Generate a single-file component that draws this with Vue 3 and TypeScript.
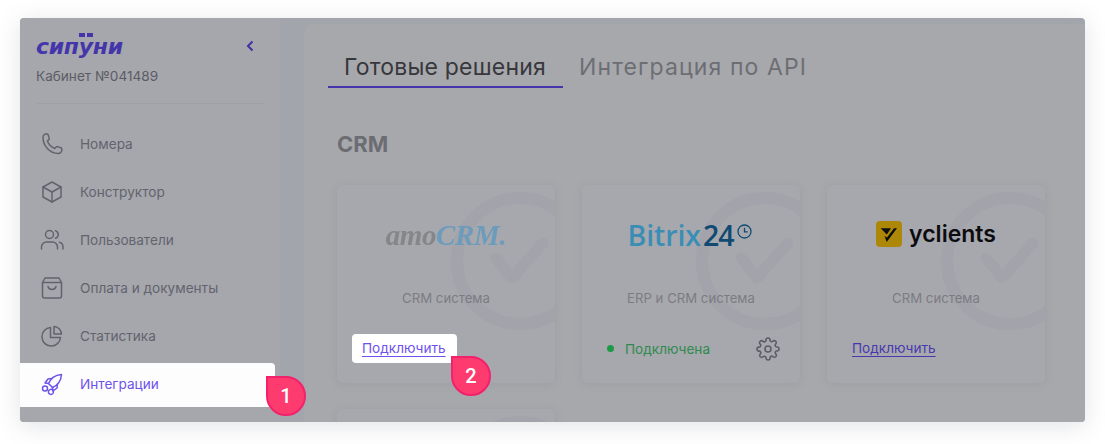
<template>
  <div class="page">
    <div class="panel">
      <aside class="sidebar">
        <div class="brand">
          <div class="logo">
            <span class="logo-text">сипуни</span>
            <i class="logo-dot dot-a"></i>
            <i class="logo-dot dot-b"></i>
          </div>
          <svg class="collapse" width="10" height="12" viewBox="0 0 10 12" fill="none">
            <path d="M7.500 1.500 3 6l4.500 4.500" stroke="#3f32a0" stroke-width="2" />
          </svg>
        </div>
        <div class="cabinet">Кабинет №041489</div>
        <div class="divider"></div>
        <nav class="nav">
          <a
            v-for="item in menu"
            :key="item.label"
            class="nav-item"
            :class="{ active: item.active }"
          >
            <svg class="nav-icon" width="24" height="24" viewBox="0 0 24 24" fill="none" stroke="currentColor" stroke-width="1.5" stroke-linecap="round" stroke-linejoin="round">
              <path v-for="d in item.paths" :key="d" :d="d" />
            </svg>
            <span>{{ item.label }}</span>
            <span v-if="item.active" class="badge badge-nav">1</span>
          </a>
        </nav>
      </aside>

      <main class="content">
        <div class="tabs">
          <div class="tab current">Готовые решения</div>
          <div class="tab">Интеграция по API</div>
        </div>
        <h2 class="section-title">CRM</h2>
        <div class="cards">
          <div v-for="card in cards" :key="card.id" class="card" :class="{ open: card.highlight }">
            <div class="watermark-clip">
              <svg class="watermark" width="140" height="140" viewBox="0 0 140 140" fill="none">
                <circle cx="70" cy="70" r="63" stroke="#a2a3ab" stroke-width="12" />
                <path d="M46 67 62 87 93 52" stroke="#a2a3ab" stroke-width="11" stroke-linecap="round" stroke-linejoin="round" />
              </svg>
            </div>

            <div class="card-logo">
              <div v-if="card.id === 'amo'" class="amo"><span class="amo-a">amo</span><span class="amo-b">CRM.</span></div>
              <div v-else-if="card.id === 'bitrix'" class="bitrix">
                <span class="bx-a">Bitrix</span><span class="bx-b">24</span>
                <svg class="bx-clock" width="15" height="15" viewBox="0 0 15 15" fill="none" stroke="#0f4a73" stroke-width="1.3">
                  <circle cx="7.500" cy="7.500" r="6.500" />
                  <path d="M7.500 3.800v4h3.200" />
                </svg>
              </div>
              <div v-else-if="card.id === 'yc'" class="yc">
                <svg width="26" height="26" viewBox="0 0 26 26">
                  <rect width="26" height="26" rx="4" fill="#ad8707" />
                  <path d="M4.700 7.300H15l-4.200 6.200zM18 7.300h3L10.700 21l-2.200-6 2.500 1.500z" fill="#0e0e0e" />
                </svg>
                <span>yclients</span>
              </div>
            </div>

            <div class="card-desc">{{ card.desc }}</div>

            <div class="card-foot">
              <template v-if="card.connected">
                <span class="status"><i class="status-dot"></i>Подключена</span>
                <svg class="gear" width="24" height="24" viewBox="0 0 24 24" fill="none" stroke="#5c5d68" stroke-width="1.6" stroke-linecap="round" stroke-linejoin="round">
                  <circle cx="12" cy="12" r="3" />
                  <path d="M19.400 15a1.650 1.650 0 0 0 .33 1.820l.06.06a2 2 0 1 1-2.830 2.830l-.06-.06a1.650 1.650 0 0 0-1.820-.33 1.650 1.650 0 0 0-1 1.510V21a2 2 0 1 1-4 0v-.09A1.650 1.650 0 0 0 9 19.400a1.650 1.650 0 0 0-1.820.33l-.06.06a2 2 0 1 1-2.830-2.830l.06-.06a1.650 1.650 0 0 0 .33-1.820 1.650 1.650 0 0 0-1.510-1H3a2 2 0 1 1 0-4h.09A1.650 1.650 0 0 0 4.600 9a1.650 1.650 0 0 0-.33-1.820l-.06-.06a2 2 0 1 1 2.830-2.830l.06.06a1.650 1.650 0 0 0 1.820.33H9a1.650 1.650 0 0 0 1-1.510V3a2 2 0 1 1 4 0v.09a1.650 1.650 0 0 0 1 1.510 1.650 1.650 0 0 0 1.820-.33l.06-.06a2 2 0 1 1 2.830 2.830l-.06.06a1.650 1.650 0 0 0-.33 1.820V9a1.650 1.650 0 0 0 1.510 1H21a2 2 0 1 1 0 4h-.09a1.650 1.650 0 0 0-1.510 1z" />
                </svg>
              </template>
              <a v-else class="connect" :class="{ lit: card.highlight }">
                Подключить
                <span v-if="card.highlight" class="badge badge-link">2</span>
              </a>
            </div>
          </div>
          <div class="card">
            <div class="watermark-clip">
              <svg class="watermark" width="140" height="140" viewBox="0 0 140 140" fill="none">
                <circle cx="70" cy="70" r="63" stroke="#a2a3ab" stroke-width="12" />
              </svg>
            </div>
          </div>
        </div>
      </main>
    </div>
  </div>
</template>

<script setup lang="ts">
interface MenuItem {
  label: string
  paths: string[]
  active?: boolean
}

interface Card {
  id: string
  desc: string
  connected?: boolean
  highlight?: boolean
}

const menu: MenuItem[] = [
  {
    label: 'Номера',
    paths: ['M3 5.500C3 3.600 4.400 2 6 2h1c.6 0 1 .3 1.200.9l1 3.300c.2.500 0 1-.3 1.400L7.400 9c1.200 3.200 4.100 6.200 7.300 7.500l1.500-1.500c.4-.3.900-.5 1.400-.3l3.300 1c.6.200.9.600.9 1.200v1.100c0 1.900-1.600 3.500-3.500 3.400C9.500 21.300 3 13.500 3 5.500z'],
  },
  {
    label: 'Конструктор',
    paths: ['M12 2 21 7v10l-9 5-9-5V7l9-5z', 'M3 7l9 5 9-5', 'M12 12v10'],
  },
  {
    label: 'Пользователи',
    paths: [
      'M9.500 10.500a4 4 0 1 0 0-8 4 4 0 0 0 0 8z',
      'M1.500 21v-2a5 5 0 0 1 5-5h6a5 5 0 0 1 5 5v2',
      'M15.500 2.700a4 4 0 0 1 0 7.600',
      'M19.500 14.300a5 5 0 0 1 3.500 4.700v2',
    ],
  },
  {
    label: 'Оплата и документы',
    paths: [
      'M5 2h14l2.500 4.500V20a2 2 0 0 1-2 2h-15a2 2 0 0 1-2-2V6.500L5 2z',
      'M2.500 6.500h19',
      'M8 10.500c.5 2 2 3 4 3s3.500-1 4-3',
    ],
  },
  {
    label: 'Статистика',
    paths: ['M10.500 3.500a9.300 9.300 0 1 0 10 10H10.500v-10z', 'M14 2.500a8 8 0 0 1 7.500 7.500H14V2.500z'],
  },
  {
    label: 'Интеграции',
    active: true,
    paths: [
      'M8.500 11.500C10.500 6.500 15 3 21.500 2.500 21 9 17.500 13.500 12.500 15.500l-4-4z',
      'M8.500 11.500 5 11l3-4 4-.5',
      'M12.500 15.500l.5 3.500 4-3 .5-4',
      'M5 14a2.500 2.500 0 1 1 0 5 2.500 2.500 0 0 1 0-5z',
      'M13 18.500a2.500 2.500 0 1 1-4.500 2 2.500 2.500 0 0 1 4.500-2z',
    ],
  },
]

const cards: Card[] = [
  { id: 'amo', desc: 'CRM система', highlight: true },
  { id: 'bitrix', desc: 'ERP и CRM система', connected: true },
  { id: 'yc', desc: 'CRM система' },
]
</script>

<style>
html,
body {
  margin: 0;
  background: #fff;
  overflow: hidden;
}
</style>

<style scoped>
.page {
  width: 1105px;
  height: 444px;
  padding: 18px 20px 22px;
  box-sizing: border-box;
  font-family: Inter, "Noto Sans", sans-serif;
}

.panel {
  display: flex;
  height: 404px;
  border-radius: 4px;
  background: #a3a5ac;
  box-shadow: 0 4px 24px rgba(110, 115, 130, 0.2);
}

.sidebar {
  width: 260px;
  flex: none;
  box-sizing: border-box;
  padding-top: 15px;
  border-radius: 4px 0 0 4px;
  background: #a6a7ac;
}

.brand {
  display: flex;
  align-items: center;
  justify-content: space-between;
  padding: 0 25px 0 16px;
  height: 25px;
}

.logo {
  position: relative;
  height: 25px;
}

.logo-text {
  display: block;
  font-family: "DejaVu Sans", sans-serif;
  font-size: 22px;
  line-height: 27px;
  font-weight: 700;
  font-style: italic;
  letter-spacing: -0.3px;
  color: #4435ab;
}

.logo-dot {
  position: absolute;
  top: 0;
  width: 6px;
  height: 4px;
  background: #4435ab;
}

.dot-a {
  left: 43px;
}

.dot-b {
  left: 51px;
}

.cabinet {
  margin: 9px 0 0 16px;
  font-size: 13.6px;
  line-height: 18px;
  color: #5b5c65;
}

.divider {
  height: 1px;
  margin: 18px 16px 0 16px;
  background: #a0a1a7;
}

.nav {
  display: flex;
  flex-direction: column;
  margin-top: 16px;
}

.nav-item {
  position: relative;
  display: flex;
  align-items: center;
  gap: 16px;
  width: 255px;
  height: 48px;
  box-sizing: border-box;
  padding-left: 20px;
  font-size: 13.6px;
  color: #62636e;
}

.nav-item.active {
  height: 44px;
  margin-top: 3px;
  padding-bottom: 2px;
  border-radius: 0 4px 4px 0;
  background: #fdfdfd;
  color: #6d52ec;
}

.content {
  flex: 1;
  min-width: 0;
  overflow: hidden;
  margin: 6px 0 0 24px;
  padding: 27px 0 0 0;
  border-radius: 10px 0 4px 0;
  background: #a7a8ac;
}

.tabs {
  display: flex;
  gap: 16px;
  height: 37px;
  margin-left: 24px;
}

.tab {
  font-size: 23px;
  line-height: 32px;
  letter-spacing: 1.1px;
  color: #6d6e74;
}

.tab.current {
  padding: 0 17px 0 16px;
  height: 37px;
  box-sizing: border-box;
  border-bottom: 2px solid #4435ab;
  letter-spacing: 0.2px;
  color: #37373c;
}

.section-title {
  margin: 36px 0 0 33px;
  font-size: 22px;
  line-height: 40px;
  font-weight: 700;
  color: #6c6d73;
}

.cards {
  display: grid;
  grid-template-columns: repeat(3, 218px);
  grid-auto-rows: 198px;
  gap: 26px 27px;
  margin: 21px 0 0 33px;
}

.card {
  position: relative;
  display: flex;
  flex-direction: column;
  border-radius: 6px;
  background: #a7a8ad;
  box-shadow: 0 1px 8px rgba(90, 92, 105, 0.12);
}

.watermark-clip {
  position: absolute;
  inset: 0;
  overflow: hidden;
  border-radius: 6px;
}

.watermark {
  position: absolute;
  top: 6px;
  left: 113px;
}

.card-logo {
  position: relative;
  display: flex;
  align-items: center;
  justify-content: center;
  height: 100px;
}

.amo {
  font-family: "Liberation Serif", serif;
  font-size: 29px;
  font-weight: 700;
  font-style: italic;
  letter-spacing: -0.4px;
  filter: blur(0.3px);
}

.amo-a {
  color: #858689;
}

.amo-b {
  color: #6c9bbb;
}

.bitrix {
  display: flex;
  align-items: center;
  margin-left: -2px;
  font-family: "Open Sans", sans-serif;
  font-size: 28.5px;
  font-weight: 600;
  letter-spacing: -0.1px;
}

.bx-a {
  color: #3a8db5;
}

.bx-b {
  margin-left: 2px;
  font-weight: 600;
  letter-spacing: -1px;
  color: #0f4a73;
}

.bx-clock {
  margin: -8px 0 0 4px;
}

.yc {
  display: flex;
  align-items: center;
  gap: 7px;
  margin-top: -2px;
  font-size: 23px;
  font-weight: 600;
  color: #0c0c10;
}

.card-desc {
  position: relative;
  margin-top: 3px;
  font-size: 13.2px;
  line-height: 20px;
  text-align: center;
  color: #7b7c83;
}

.card-foot {
  position: relative;
  display: flex;
  align-items: center;
  justify-content: space-between;
  height: 29px;
  margin-top: 26px;
  padding: 0 20px 0 15px;
}

.connect {
  position: relative;
  padding: 6px 11px 6px 10px;
  font-size: 13.6px;
  line-height: 17px;
  color: #4838ad;
  text-decoration: underline;
  text-underline-offset: 3px;
  text-decoration-thickness: 1px;
}

.connect.lit {
  border-radius: 4px;
  background: #fff;
  color: #6d52ec;
}

.status {
  display: flex;
  align-items: center;
  gap: 11px;
  padding-left: 10px;
  font-size: 13.6px;
  color: #2f8a4e;
}

.status-dot {
  width: 7px;
  height: 7px;
  border-radius: 50%;
  background: #1c9a45;
}

.badge {
  position: absolute;
  display: flex;
  align-items: center;
  justify-content: center;
  width: 40px;
  height: 40px;
  box-sizing: border-box;
  border: 2px solid #f3216b;
  border-radius: 0 50% 50% 50%;
  background: #fe3b6f;
  font-family: Roboto, sans-serif;
  font-size: 20px;
  font-weight: 500;
  color: #fff;
  text-decoration: none;
}

.badge-nav {
  top: 13px;
  left: 246px;
}

.badge-link {
  top: 22px;
  left: 99px;
}
</style>
